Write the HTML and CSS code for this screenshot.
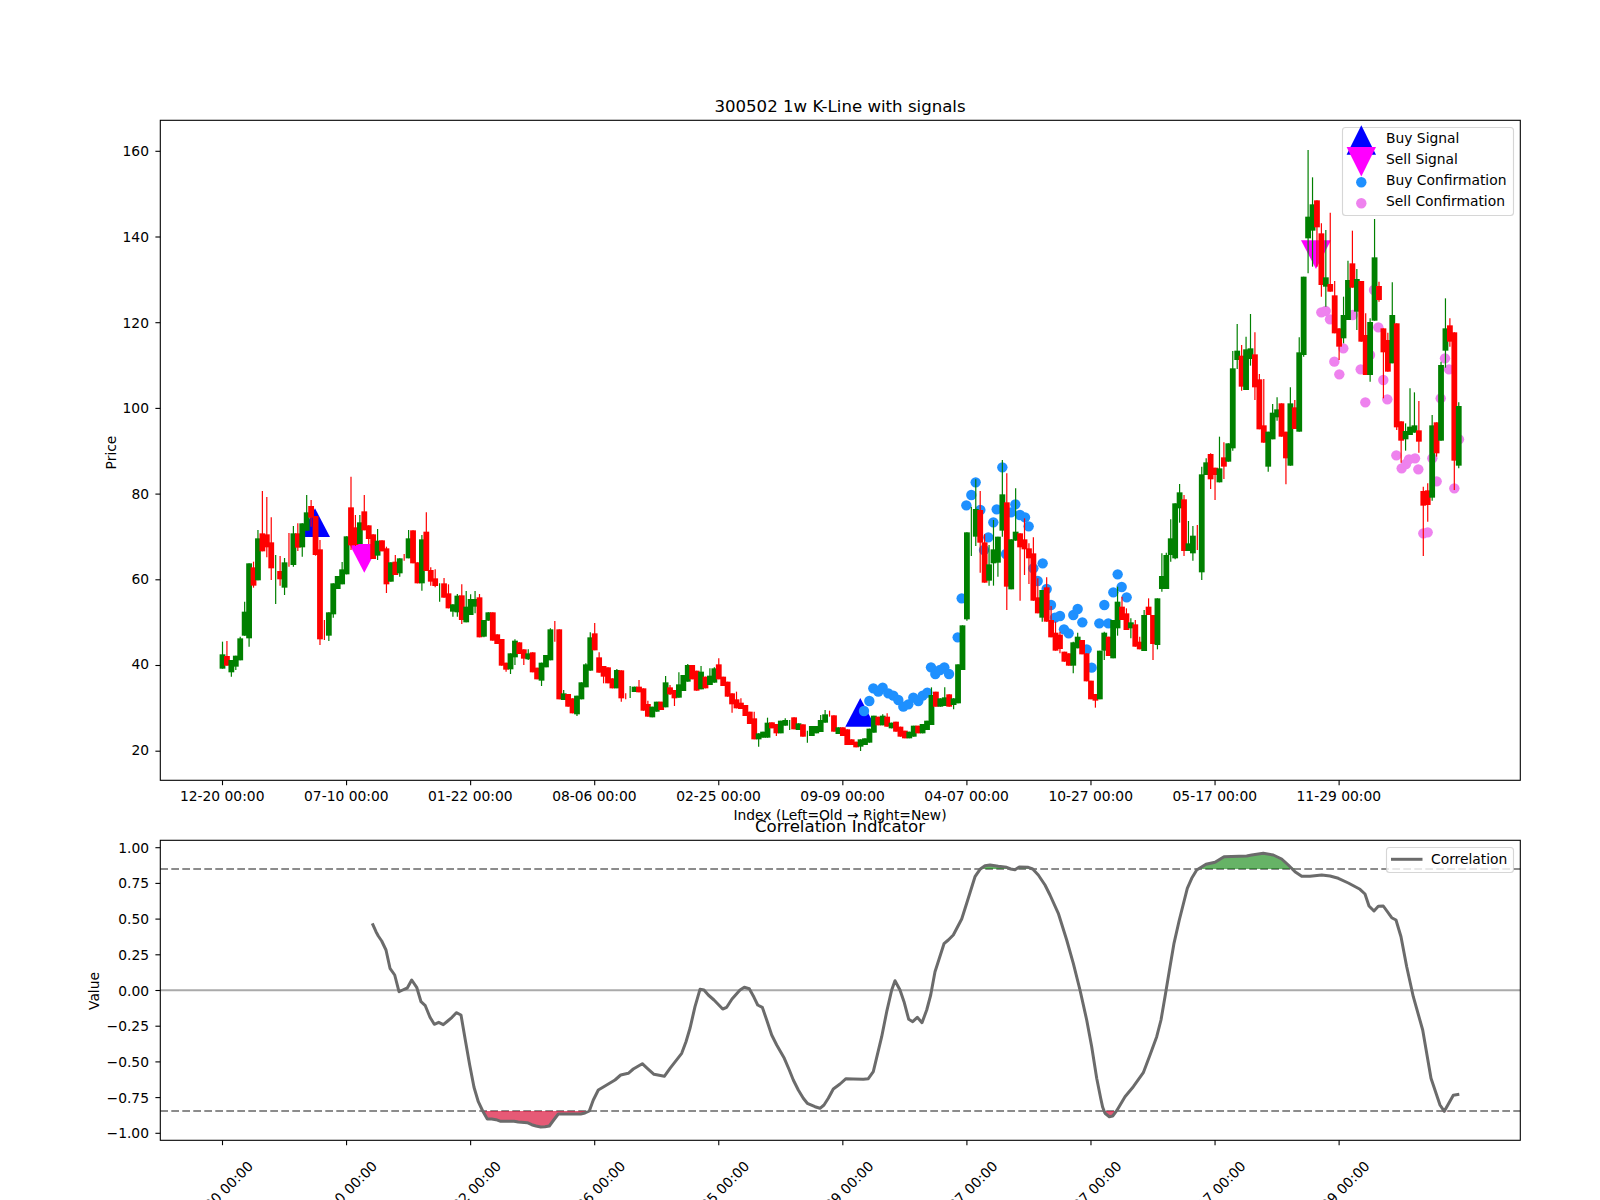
FILE: index.html
```html
<!DOCTYPE html>
<html lang="en">
<head>
<meta charset="utf-8">
<title>300502 1w K-Line with signals</title>
<link rel="stylesheet" href="styles.css">
</head>
<body>
<main class="figure">
<svg class="chart" width="1600" height="1200" viewBox="0 0 1600 1200" xmlns="http://www.w3.org/2000/svg">
  <g id="priceMarkers"></g>
  <g id="candles"></g>
  <g id="corrRefs"></g>
  <g id="corrFill"></g>
  <polyline id="corrLine" class="corr-line" points=""></polyline>
  <rect class="spine" x="160.3" y="120.3" width="1360" height="660"></rect>
  <rect class="spine" x="160.3" y="840.3" width="1360" height="300"></rect>
  <g id="tickMarks"></g>

  <text class="title" x="840" y="112">300502 1w K-Line with signals</text>

  <g class="ylabels">
    <text x="149" y="156.3">160</text>
    <text x="149" y="242">140</text>
    <text x="149" y="328">120</text>
    <text x="149" y="413">100</text>
    <text x="149" y="499">80</text>
    <text x="149" y="584.3">60</text>
    <text x="149" y="669.3">40</text>
    <text x="149" y="755.3">20</text>
    <text x="149" y="852.7">1.00</text>
    <text x="149" y="888.4">0.75</text>
    <text x="149" y="924.1">0.50</text>
    <text x="149" y="959.8">0.25</text>
    <text x="149" y="995.5">0.00</text>
    <text x="149" y="1031.2">−0.25</text>
    <text x="149" y="1066.9">−0.50</text>
    <text x="149" y="1102.6">−0.75</text>
    <text x="149" y="1138.3">−1.00</text>
  </g>

  <g class="xlabels">
    <text x="222.2" y="801">12-20 00:00</text>
    <text x="346.3" y="801">07-10 00:00</text>
    <text x="470.3" y="801">01-22 00:00</text>
    <text x="594.4" y="801">08-06 00:00</text>
    <text x="718.5" y="801">02-25 00:00</text>
    <text x="842.6" y="801">09-09 00:00</text>
    <text x="966.6" y="801">04-07 00:00</text>
    <text x="1090.7" y="801">10-27 00:00</text>
    <text x="1214.8" y="801">05-17 00:00</text>
    <text x="1338.8" y="801">11-29 00:00</text>
  </g>

  <g class="rotlabels">
    <text transform="translate(254 1167) rotate(-45)">12-20 00:00</text>
    <text transform="translate(378.1 1167) rotate(-45)">07-10 00:00</text>
    <text transform="translate(502.1 1167) rotate(-45)">01-22 00:00</text>
    <text transform="translate(626.2 1167) rotate(-45)">08-06 00:00</text>
    <text transform="translate(750.3 1167) rotate(-45)">02-25 00:00</text>
    <text transform="translate(874.4 1167) rotate(-45)">09-09 00:00</text>
    <text transform="translate(998.4 1167) rotate(-45)">04-07 00:00</text>
    <text transform="translate(1122.5 1167) rotate(-45)">10-27 00:00</text>
    <text transform="translate(1246.6 1167) rotate(-45)">05-17 00:00</text>
    <text transform="translate(1370.6 1167) rotate(-45)">11-29 00:00</text>
  </g>

  <text class="axis-label" x="840" y="820">Index (Left=Old → Right=New)</text>
  <text class="title" x="840" y="831.5">Correlation Indicator</text>
  <text class="axis-label" transform="translate(116 452.5) rotate(-90)">Price</text>
  <text class="axis-label" transform="translate(99 991) rotate(-90)">Value</text>

  <g class="legend">
    <rect class="legend-box" x="1342.5" y="127.5" width="171" height="88" rx="3"></rect>
    <polygon class="mark-buy" points="1361.3,125.2 1376,154.7 1346.6,154.7"></polygon>
    <polygon class="mark-sell" points="1346.6,147 1376,147 1361.3,176.4"></polygon>
    <circle class="dot-buy" cx="1361.3" cy="182.3" r="5.2"></circle>
    <circle class="dot-sell" cx="1361.3" cy="203.3" r="5.2"></circle>
    <text x="1386" y="143.3">Buy Signal</text>
    <text x="1386" y="164.3">Sell Signal</text>
    <text x="1386" y="185.3">Buy Confirmation</text>
    <text x="1386" y="206.3">Sell Confirmation</text>

    <rect class="legend-box" x="1386.5" y="847.5" width="127" height="25" rx="3"></rect>
    <line class="corr-line" x1="1391" y1="859.3" x2="1422.5" y2="859.3"></line>
    <text x="1431" y="864.3">Correlation</text>
  </g>
</svg>
</main>
<script src="script.js"></script>
</body>
</html>
```
FILE: styles.css
```css
html, body {
  margin: 0;
  padding: 0;
  background: #fff;
}
.figure {
  width: 1600px;
  height: 1200px;
  overflow: hidden;
}
.chart {
  display: block;
}
.chart text {
  font-family: "DejaVu Sans", sans-serif;
  font-size: 13.85px;
  fill: #000;
}
.chart .title {
  font-size: 16.6px;
  text-anchor: middle;
}
.chart .axis-label {
  text-anchor: middle;
}
.ylabels text {
  text-anchor: end;
}
.xlabels text {
  text-anchor: middle;
}
.rotlabels text {
  text-anchor: end;
}
.spine {
  fill: none;
  stroke: #000;
  stroke-width: 1.1;
}
.tick {
  stroke: #000;
  stroke-width: 1.1;
}
.wick-g, .wick-r {
  stroke-width: 1.2;
}
.wick-g { stroke: #008000; }
.wick-r { stroke: #ff0000; }
.body-g { fill: #008000; }
.body-r { fill: #ff0000; }
.mark-buy { fill: #0000ff; }
.mark-sell { fill: #ff00ff; }
.dot-buy { fill: #1e90ff; }
.dot-sell { fill: #ee82ee; }
.ref-dash {
  stroke: #8c8c8c;
  stroke-width: 2;
  stroke-dasharray: 7.7 3.3;
}
.ref-zero {
  stroke: #aaaaaa;
  stroke-width: 2;
}
.fill-high { fill: #008000; fill-opacity: 0.6; }
.fill-low { fill: #dc143c; fill-opacity: 0.7; }
.corr-line {
  fill: none;
  stroke: #6b6b6b;
  stroke-width: 3;
  stroke-linejoin: round;
}
.legend-box {
  fill: #fff;
  fill-opacity: 0.8;
  stroke: #cccccc;
  stroke-opacity: 0.8;
  stroke-width: 1.1;
}
```
FILE: script.js
```js
var NS = 'http://www.w3.org/2000/svg';
function el(parent, name, attrs) {
  var n = document.createElementNS(NS, name);
  for (var k in attrs) n.setAttribute(k, attrs[k]);
  parent.appendChild(n);
  return n;
}
function $(id) { return document.getElementById(id); }

/* candles: colour wickTop bodyTop bodyBottom wickBottom, read in 3x crop units */
var SEGMENTS = [
[440, `g 605 643 686 686|r 603 648 677 677|g 660 660 697 710|g 647 647 680 690|g 590 595 661 661|g 485 515 587 587|g 370 370 595 620|r 365 382 437 443|g 270 295 421 421|r 153 280 334 334|r 171 283 322 352|r 232 307 385 420|g 345 420 420 492|r 348 393 418 437|g 354 367 443 465|r 279 350 350 380|g 258 280 375 380|r 250 280 323 333|g 250 250 322 350|g 165 217 272 272|r 180 198 233 260|r 228 228 345 347|r 300 328 598 615|r 540 590 590 600|g 517 517 587 603|g 430 430 523 533|g 408 408 447 447|g 366 388 433 433|g 289 289 403 403|r 110 202 316 330|r 225 262 315 318|g 225 247 312 312|r 165 214 271 271|r 256 256 297 312|r 283 283 357 357|g 267 302 347 360|r 301 301 334 334|r 320 325 433 459|g 367 367 425 425|r 345 365 405 405|g 355 355 400 410|r 342 355 355 362|g 270 295 355 355|r 271 271 370 370|r 367 367 430 430|g 285 298 430 452|r 217 275 393 393|r 382 390 425 437|r 388 415 438 442|g 430 470 470 485|r 414 430 473 473|r 433 460 505 505|g 493 493 515 530|g 462 467 517 530|r 433 466 540 552|g 453 500 547 547|g 463 477 525 525|g 453 477 500 520|r 462 472 592 592|g 540 540 590 592|g 517 517 542 542|r 517 517 602 602|r 583 583 612 612|r 597 597 677 677|r 668 668 689 695|g 640 640 688 702|g 598 602 652 675|r 607 607 642 642|r 628 628 656 675|g 628 640 658 660|r 637 637 697 697|r 683 683 718 718|g 668 668 722 738|g 645 645 682 682|g 565 568 661 661|r 543 590 590 605|r 568 568 778 778|g 750 760 780 780|r 762 762 800 800|r 775 775 820 820|g 767 767 823 828|g 727 727 778 778|g 670 673 742 742|g 577 592 692 692|r 549 580 631 631`],
[580, `r 217 232 278 278|r 258 258 290 310|r 262 262 310 310|r 295 295 325 325|g 267 270 325 325|r 271 271 355 365|r 340 350 350 358|g 318 335 335 354|g 320 320 336 336|r 300 320 337 337|r 325 325 392 392|r 362 372 410 410|g 380 380 412 412|g 365 365 395 395|r 365 365 390 390|g 288 307 382 382|r 315 322 343 345|r 330 330 355 378|g 277 313 353 353|g 285 285 333 333|g 252 255 305 305|r 255 255 298 298|r 272 272 332 332|g 258 275 328 328|r 290 290 325 325|g 265 287 315 315|g 262 265 308 308|r 235 253 298 298|r 290 290 318 318|r 305 305 350 350|r 340 340 373 398|r 335 358 385 385|r 355 368 387 387|r 375 375 408 408|r 395 395 432 432|r 395 415 478 478|g 460 460 478 500|g 455 455 473 473|g 413 428 473 473|r 427 427 445 445|r 432 432 460 468|g 422 422 460 460|g 415 420 437 437|g 420 435 435 450|r 412 412 448 448|g 430 430 450 450|r 433 433 470 470|g 452 470 470 488|g 438 438 468 468|g 438 438 460 460|g 405 420 456 456|g 390 403 428 428|r 392 400 400 410|r 406 406 455 455|g 442 442 462 462|r 442 442 468 468|r 448 448 495 495|r 478 478 495 495|r 485 485 502 502|g 478 478 500 513|g 475 475 495 495|g 446 446 488 488|g 407 407 458 458|r 410 410 436 436|g 403 407 436 436|r 400 410 440 440|g 428 428 445 445|r 425 425 455 455|r 440 440 470 470|r 452 452 475 475|g 455 455 475 475|g 437 437 470 470|r 437 437 460 460|g 432 432 460 460|g 422 422 450 450|g 322 345 435 435|r 335 335 380 380|g 355 355 380 380|g 322 352 378 378|r 343 343 380 380|g 355 355 375 388|g 253 253 370 370|g 136 136 270 270`],
[440, `g 277 277 538 542|g 200 320 320 348|g 118 207 290 318|r 153 210 308 398|r 283 307 428 428|g 315 373 422 437|g 240 328 370 437|g 290 290 368 410|g 60 163 272 290|r 100 187 440 510|g 298 298 448 448|g 145 275 302 302|r 280 280 322 482|r 235 298 328 405|r 310 325 355 432|r 292 340 482 482|r 415 472 520 520|g 450 450 533 545|r 412 442 545 545|r 498 540 592 592|r 545 578 632 632|r 575 584 627 640|r 635 635 665 665|r 640 640 677 677|g 605 607 677 700|g 578 590 625 625|r 600 600 643 643|r 640 640 724 724|r 722 722 778 778|r 762 762 782 803|g 632 632 778 778|g 575 578 632 660|r 590 590 648 648|g 540 540 655 655|g 440 485 565 587|r 470 500 540 540|r 505 520 570 570|g 535 547 565 595|r 540 553 620 620|r 590 605 628 628|g 510 525 633 633|r 475 500 525 525|r 525 525 612 660|g 475 475 615 628|g 340 408 447 455|g 338 345 447 447|g 238 295 345 365|g 190 190 355 358`],
[300, `g 552 577 625 668|r 585 598 753 768|g 663 730 753 753|g 678 707 760 782|r 675 710 710 750|g 500 523 817 840|g 475 487 525 525|r 460 462 538 567|r 503 503 525 600|g 410 505 547 547|r 427 472 500 537|g 430 430 485 485|g 153 205 445 452|g 72 152 180 207|r 135 167 260 272|g 110 148 270 270|g 42 145 177 197|r 97 163 262 300|r 222 238 388 388|r 237 376 428 428|g 395 395 500 515|g 312 338 418 418|g 292 328 352 362|r 310 310 410 410|r 395 395 475 553|g 262 310 497 497|r 300 322 387 387|g 112 157 395 395`],
[110, `g 500 500 735 740|g 120 320 385 490|g 202 283 362 470|r 271 271 352 470|r 340 370 525 560|g 360 502 530 590|r 308 522 545 545|r 513 556 670 670|r 655 655 710 750|g 560 615 685 700|g 452 510 630 630|r 362 460 533 533|g 477 507 605 660|r 513 513 695 695|r 610 675 795 795|g 625 636 795 815|g 327 442 632 632|r 515 528 570 575|r 655 655 727 865|r 668 690 785 785|g 517 615 760 760`],
[300, `r 70 70 382 390|r 364 364 422 488|g 370 393 418 452|g 265 380 405 405|g 277 376 398 398|r 303 391 425 458|r 560 573 617 768|r 550 571 615 665|g 345 376 593 602|r 367 367 460 470|g 185 195 422 422|g -5 85 152 203|r 55 76 125 140|r 97 97 482 570|g 307 318 497 505`]
];

/* marker dots, as [crop x, crop y] with each crop's origin */
var BUY_DOTS = [
  [580, 580, [[852,393],[868,363],[880,325],[895,335],[908,323],[925,340],[940,347],[955,360],[970,380],[985,373],[1000,353],[1015,363],[1028,347],[1042,338],[1053,262],[1066,282],[1080,270],[1093,262],[1107,282],[1133,172],[1145,55]]],
  [900, 440, [[199,196],[214,165],[227,127],[241,210],[252,330],[265,292],[280,247],[290,208],[307,82],[318,342],[333,217],[346,193],[360,225],[375,232],[386,259],[400,385],[413,423],[428,370],[440,447],[453,495],[465,533],[480,528],[492,568],[506,580],[520,525],[533,507],[547,547],[560,628],[575,683],[598,550],[613,495],[625,550],[640,457],[653,403],[665,441],[680,472]]]
];
var SELL_DOTS = [
  [1150, 110, [[514,607],[527,603],[540,628],[580,715],[608,615],[553,755],[568,793],[632,778],[660,735],[700,810],[712,868],[646,877],[685,652],[885,745],[897,778],[872,865],[672,540]]],
  [1150, 300, [[739,466],[755,505],[768,492],[777,478],[795,475],[805,508],[847,475],[860,544],[927,418],[913,565],[820,700],[833,697]]]
];
var BUY_TRI = [[315, 508.3], [860.3, 698]];
var SELL_TRI = [[364.3, 572.7], [1316, 269]];

/* correlation curve: crop x, crop y with each crop's x origin (crop y origin 770) */
var CORR = [
  [100, [[817,460],[828,485],[835,498],[845,513],[858,540],[870,595],[884,615],[897,665],[908,660],[922,654],[935,630],[950,652],[963,695],[976,707],[990,742],[1003,763],[1016,757],[1030,764],[1043,753],[1056,742],[1069,728],[1083,735],[1096,810],[1109,885],[1122,952],[1135,995],[1148,1023],[1162,1047],[1175,1047],[1188,1049],[1202,1054],[1215,1054],[1242,1054],[1255,1056],[1282,1058],[1295,1064],[1308,1068],[1322,1071],[1335,1070],[1348,1068],[1361,1050],[1375,1032],[1442,1032],[1455,1029],[1468,1023],[1480,990],[1495,960]]],
  [600, [[15,948],[45,930],[62,915],[85,910],[100,897],[127,881],[142,895],[162,913],[193,919],[210,895],[245,850],[258,815],[270,775],[285,710],[300,658],[312,660],[325,675],[342,690],[368,717],[380,712],[396,687],[420,660],[433,652],[448,656],[462,682],[473,705],[487,712],[500,750],[515,795],[530,825],[553,865],[568,900],[580,930],[595,960],[610,985],[622,1000],[645,1010],[660,1015],[672,1005],[685,985],[700,957],[720,942],[738,926],[760,927],[790,928],[805,926],[820,905],[845,800],[860,725],[875,660],[885,632],[900,660],[912,695],[926,748],[938,755],[952,742],[966,758],[980,720],[992,675],[1005,605],[1032,521],[1045,510],[1060,495],[1085,447],[1100,400],[1125,320],[1140,298],[1155,287],[1170,285],[1195,289],[1220,292],[1232,297],[1245,299],[1258,291],[1285,292],[1298,297],[1315,315],[1335,345],[1350,375],[1375,430],[1400,510],[1420,580],[1440,660],[1460,750],[1475,830],[1490,925]]],
  [1100, [[2,985],[8,1012],[15,1030],[28,1040],[38,1038],[50,1022],[75,980],[100,950],[130,908],[150,855],[170,800],[183,750],[195,680],[210,590],[222,520],[238,450],[262,355],[275,325],[290,300],[318,283],[345,277],[372,260],[440,258],[455,255],[490,250],[520,255],[545,267],[565,285],[585,305],[605,319],[630,319],[665,315],[690,318],[715,325],[745,339],[780,358],[795,372],[807,408],[822,423],[835,409],[850,408],[875,443],[888,450],[903,500],[920,590],[940,680],[968,780],[993,925],[1020,1005],[1033,1024],[1060,976],[1078,973]]]
];

var X0 = 222.5, DX = 4.431, BODY = 5.8;
var i = 0;
var candles = $('candles');
SEGMENTS.forEach(function (seg) {
  var off = seg[0];
  seg[1].split('|').forEach(function (row) {
    var p = row.split(' ');
    var c = p[0], x = X0 + DX * i;
    var wt = off + p[1] / 3, bt = off + p[2] / 3, bb = off + p[3] / 3, wb = off + p[4] / 3;
    el(candles, 'line', { 'class': 'wick-' + c, x1: x, x2: x, y1: wt, y2: wb });
    if (bb > bt) {
      el(candles, 'rect', { 'class': 'body-' + c, x: x - BODY / 2, y: bt, width: BODY, height: bb - bt });
    }
    i++;
  });
});

var marks = $('priceMarkers');
BUY_TRI.forEach(function (t) {
  el(marks, 'polygon', { 'class': 'mark-buy', points: t[0] + ',' + t[1] + ' ' + (t[0] + 15) + ',' + (t[1] + 28.7) + ' ' + (t[0] - 15) + ',' + (t[1] + 28.7) });
});
SELL_TRI.forEach(function (t) {
  el(marks, 'polygon', { 'class': 'mark-sell', points: t[0] + ',' + t[1] + ' ' + (t[0] + 15) + ',' + (t[1] - 28.7) + ' ' + (t[0] - 15) + ',' + (t[1] - 28.7) });
});
function dots(groups, cls) {
  groups.forEach(function (g) {
    g[2].forEach(function (d) {
      el(marks, 'circle', { 'class': cls, cx: g[0] + d[0] / 3, cy: g[1] + d[1] / 3, r: 5.2 });
    });
  });
}
dots(BUY_DOTS, 'dot-buy');
dots(SELL_DOTS, 'dot-sell');

var Y_HIGH = 869, Y_LOW = 1111, Y_ZERO = 990.2;
var refs = $('corrRefs');
[Y_HIGH, Y_LOW].forEach(function (y) {
  el(refs, 'line', { 'class': 'ref-dash', x1: 160.3, x2: 1520.3, y1: y, y2: y });
});
el(refs, 'line', { 'class': 'ref-zero', x1: 160.3, x2: 1520.3, y1: Y_ZERO, y2: Y_ZERO });

var pts = [];
CORR.forEach(function (g) {
  g[1].forEach(function (p) { pts.push([g[0] + p[0] / 3, 770 + p[1] / 3]); });
});
function str(a) { return a.map(function (p) { return p[0].toFixed(1) + ',' + p[1].toFixed(1); }).join(' '); }
$('corrLine').setAttribute('points', str(pts));
var fill = $('corrFill');
el(fill, 'polygon', { 'class': 'fill-high', points: str(pts.map(function (p) { return [p[0], Math.min(p[1], Y_HIGH)]; })) });
el(fill, 'polygon', { 'class': 'fill-low', points: str(pts.map(function (p) { return [p[0], Math.max(p[1], Y_LOW)]; })) });

var ticks = $('tickMarks');
for (var k = 0; k < 10; k++) {
  var tx = X0 + DX * 28 * k;
  el(ticks, 'line', { 'class': 'tick', x1: tx, x2: tx, y1: 780.3, y2: 785.2 });
  el(ticks, 'line', { 'class': 'tick', x1: tx, x2: tx, y1: 1140.3, y2: 1145.2 });
}
for (var v = 0; v < 8; v++) {
  var py = 151.3 + v * 85.7;
  el(ticks, 'line', { 'class': 'tick', x1: 155.4, x2: 160.3, y1: py, y2: py });
}
for (var w = 0; w < 9; w++) {
  var qy = 847.7 + w * 35.7;
  el(ticks, 'line', { 'class': 'tick', x1: 155.4, x2: 160.3, y1: qy, y2: qy });
}
```
